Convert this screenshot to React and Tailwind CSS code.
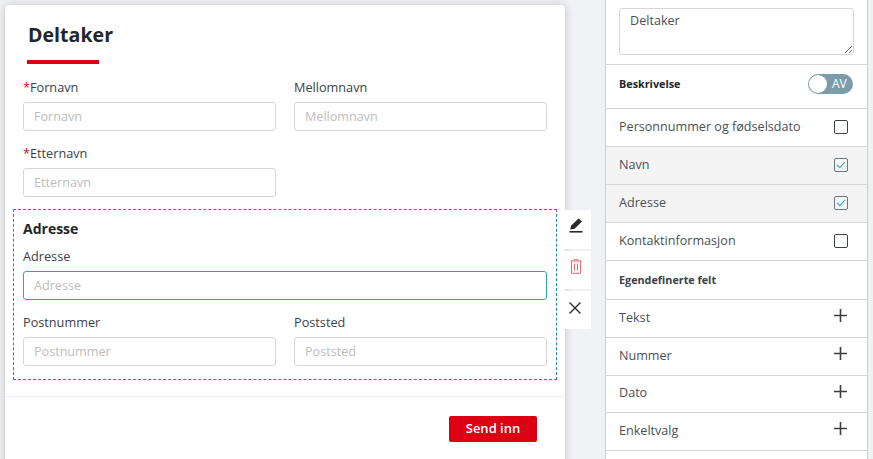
import { useState } from 'react';

const Field = ({ label, required, focused, className = '' }) => (
  <div className={className}>
    <label className="block h-[20px] text-[12.7px] leading-[20px] text-[#3b4148]">
      {required && <span className="text-[#e2001a]">*</span>}
      {label}
    </label>
    <input
      readOnly
      placeholder={label}
      className={`mt-[5px] block h-[29px] w-full rounded-[3px] border bg-white px-[10px] pb-[1px] text-[12.6px] outline-none placeholder:text-[#bdbdbd] ${focused ? 'border-[#2aa5b8]' : 'border-[#d6d6d6]'}`}
    />
  </div>
);

const Checkbox = ({ checked }) => (
  <span className={`-mt-[1px] flex h-[14px] w-[14px] items-center justify-center rounded-[2px] border ${checked ? 'border-[#6b7680]' : 'border-[#3d4349]'}`}>
    {checked && (
      <svg width="10" height="8" viewBox="0 0 10 8" fill="none" stroke="#35a9c4" strokeWidth="1.1">
        <path d="M1 3.8 3.8 6.6 9 1" />
      </svg>
    )}
  </span>
);

const PlusIcon = () => (
  <svg width="13" height="13" viewBox="0 0 13 13" stroke="#3d3d3d" strokeWidth="1.6">
    <path d="M6.5 0v13M0 6.5h13" />
  </svg>
);

const CheckRow = ({ label, checked, h }) => (
  <div className={`flex items-center justify-between border-b border-[#d6d6d6] pl-[13px] pr-[19px] text-[12.6px] text-[#4a4f55] ${h} ${checked ? 'bg-[#f4f4f4]' : ''}`}>
    <span className="pb-[1px]">{label}</span>
    <Checkbox checked={checked} />
  </div>
);

const AddRow = ({ label, h }) => (
  <div className={`flex items-center justify-between border-b border-[#d6d6d6] pl-[13px] pr-[20px] text-[12.6px] text-[#4a4f55] ${h}`}>
    <span className="pb-[1px]">{label}</span>
    <span className="-mt-[6px]"><PlusIcon /></span>
  </div>
);

export default function App() {
  const [on] = useState(false);

  return (
    <div className="flex h-[459px] w-[873px] overflow-hidden bg-[#f0f1f5] font-['Open_Sans',sans-serif]">
      {/* form card */}
      <div className="mt-[5px] ml-[5px] h-[470px] w-[560px] shrink-0 rounded-t-[4px] bg-white shadow-[0_0_10px_rgba(0,0,0,0.18)]">
        <div className="px-[18px]">
          <div className="ml-[4px] w-[72px]">
            <h1 className="whitespace-nowrap pt-[16px] pl-[1px] text-[19.6px] leading-[28px] font-bold text-[#22262a]">Deltaker</h1>
            <div className="mt-[11px] h-[4px] bg-[#dc0012]" />
          </div>
          <div className="mt-[13px] grid grid-cols-2 gap-x-[18px]">
            <Field label="Fornavn" required />
            <Field label="Mellomnavn" />
            <Field label="Etternavn" required className="mt-[12px]" />
          </div>
        </div>

        {/* selected section */}
        <div className="relative mt-[12px] ml-[8px] h-[171px] w-[544px] border border-dashed border-[#1f8a9c] px-[9px]">
          <h2 className="mt-[9px] text-[14px] leading-[20px] font-bold text-[#22262a]">Adresse</h2>
          <Field label="Adresse" focused className="mt-[7px]" />
          <div className="mt-[12px] grid grid-cols-2 gap-x-[18px]">
            <Field label="Postnummer" />
            <Field label="Poststed" />
          </div>

          {/* toolbar over the card edge */}
          <div className="absolute top-0 left-[551px] flex w-[26px] flex-col gap-[2px]">
            <button className="flex h-[39px] items-center bg-white pb-[8px] pl-[4px]">
              <svg width="14" height="15" viewBox="0 0 14 15" fill="#2b2b2b">
                <path d="M9.6 0.4 13 3.4 5.6 10.8 1.2 11.6 2.2 7.6Z" />
                <rect x="0.5" y="13" width="13" height="1.6" />
              </svg>
            </button>
            <button className="flex h-[38px] items-center bg-white pb-[7px] pl-[5px]">
              <svg width="12" height="15" viewBox="0 0 12 15" fill="none" stroke="#e56b73" strokeWidth="1">
                <path d="M0.5 2h11M4 2V0.7h4V2M1.5 2v12.3h9V2M4.5 4.5v7.3M7.5 4.5v7.3" />
              </svg>
            </button>
            <button className="flex h-[38px] items-center bg-white pb-[4px] pl-[4px]">
              <svg width="12" height="12" viewBox="0 0 12 12" stroke="#2b2b2b" strokeWidth="1.4">
                <path d="M0.5 0.5 11.5 11.5M11.5 0.5 0.5 11.5" />
              </svg>
            </button>
          </div>
        </div>

        <div className="mt-[16px] flex justify-end border-t border-[#f1f1f1] pt-[19px] pr-[28px]">
          <button className="h-[26px] w-[88px] rounded-[2px] bg-[#dc0012] text-[13px] font-semibold text-white">Send inn</button>
        </div>
      </div>

      {/* settings panel */}
      <div className="ml-[40px] h-[470px] w-[263px] shrink-0 border-x border-[#cfcfcf] bg-white">
        <div className="h-[65px] border-b border-[#d6d6d6] px-[13px] pt-[8px]">
          <textarea
            readOnly
            value="Deltaker"
            className="block h-[47px] w-full rounded-[3px] border border-[#d6d6d6] px-[10px] py-[3px] text-[12.6px] leading-[18px] text-[#4a4f55] outline-none"
          />
        </div>
        <div className="flex h-[44px] items-center justify-between border-b border-[#d6d6d6] pr-[14px] pb-[5px] pl-[13px]">
          <span className="text-[10.8px] font-bold text-[#22262a]">Beskrivelse</span>
          <span className="flex h-[20px] w-[45px] items-center rounded-full bg-[#7b9dab] pl-[1px]">
            <span className="h-[18px] w-[18px] rounded-full bg-white" />
            <span className="ml-[5px] text-[12px] text-white">{on ? 'PÅ' : 'AV'}</span>
          </span>
        </div>
        <CheckRow label="Personnummer og fødselsdato" h="h-[38px]" />
        <CheckRow label="Navn" checked h="h-[38px]" />
        <CheckRow label="Adresse" checked h="h-[38px]" />
        <CheckRow label="Kontaktinformasjon" h="h-[38px]" />
        <div className="flex h-[39px] items-center border-b border-[#d6d6d6] pl-[13px] text-[10.8px] font-bold text-[#3b4148]">
          Egendefinerte felt
        </div>
        <AddRow label="Tekst" h="h-[38px]" />
        <AddRow label="Nummer" h="h-[38px]" />
        <AddRow label="Dato" h="h-[37px]" />
        <AddRow label="Enkeltvalg" h="h-[38px]" />
      </div>
    </div>
  );
}
